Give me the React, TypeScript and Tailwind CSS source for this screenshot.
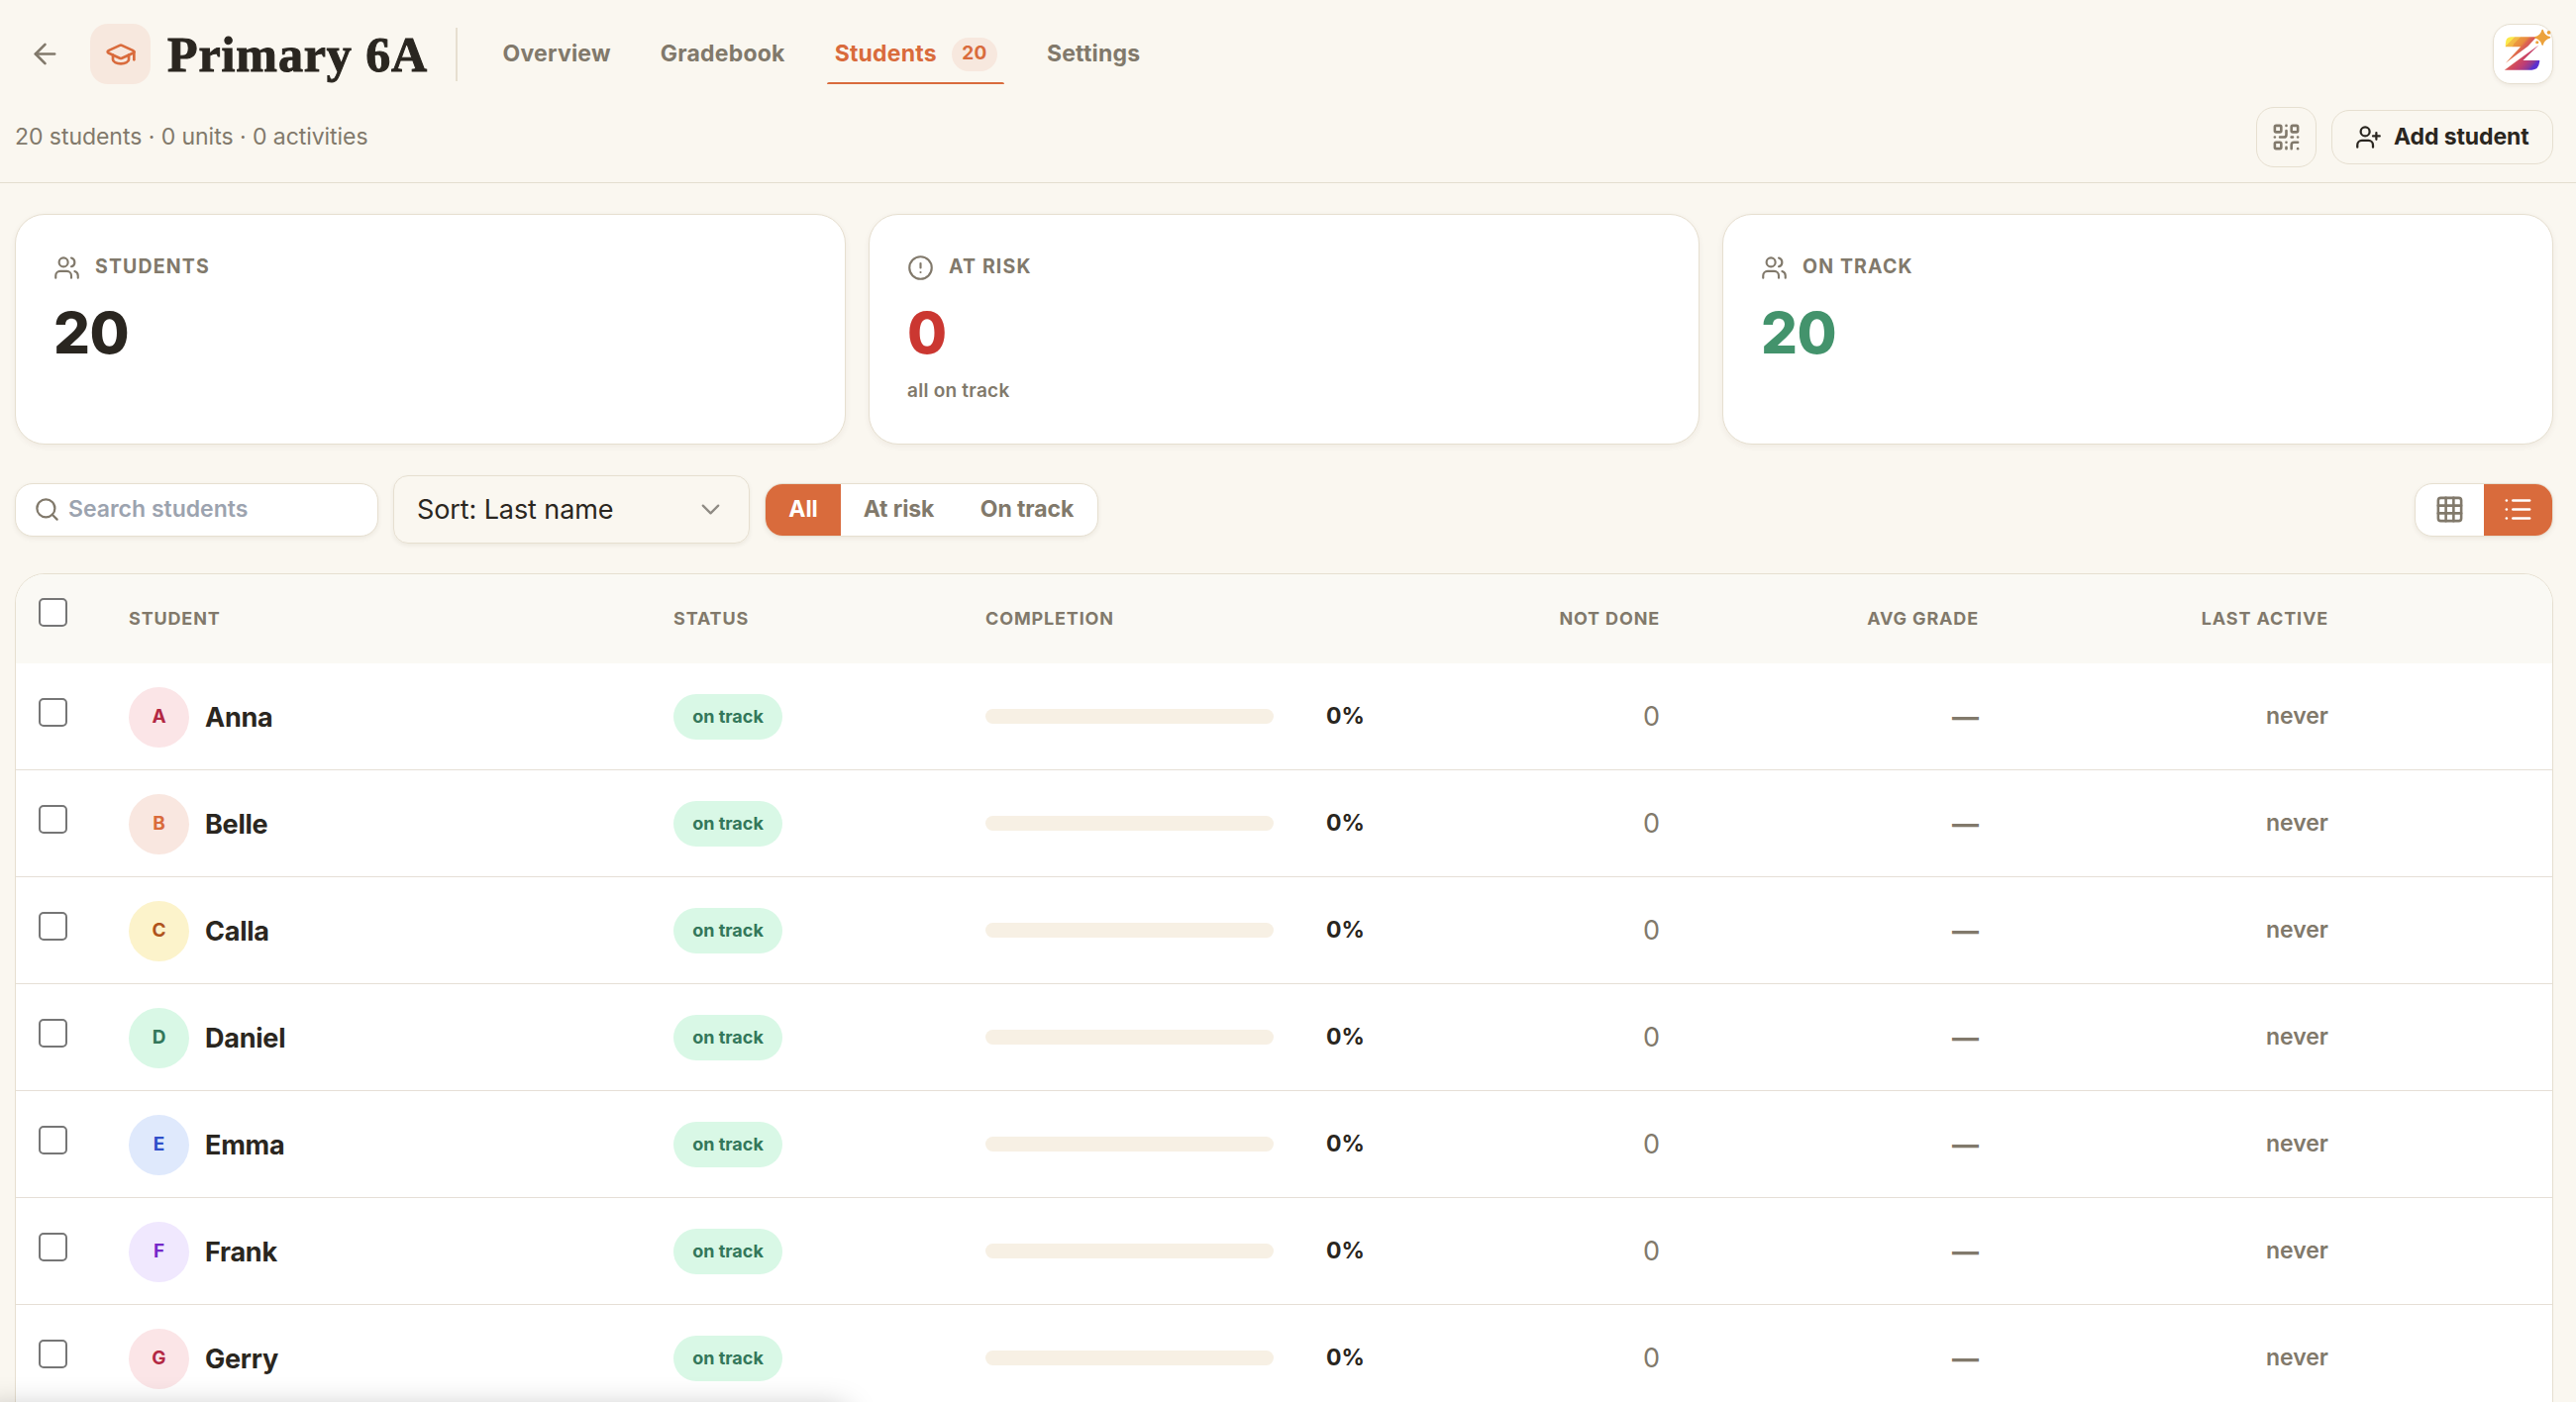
import React from 'react';
import { ArrowLeft, GraduationCap, QrCode, UserPlus, Users, CircleAlert, Search, ChevronDown, Grid3x3, List } from 'lucide-react';

const students = [
  { name: 'Anna', tone: 'bg-[#fbe5e7] text-[#b32843]' },
  { name: 'Belle', tone: 'bg-[#f9e7e0] text-[#d96b3c]' },
  { name: 'Calla', tone: 'bg-[#fcf3cb] text-[#b0531c]' },
  { name: 'Daniel', tone: 'bg-[#d9f8e6] text-[#33775a]' },
  { name: 'Emma', tone: 'bg-[#dfe9fc] text-[#2f4fc9]' },
  { name: 'Frank', tone: 'bg-[#f0e8fe] text-[#7528c9]' },
  { name: 'Gerry', tone: 'bg-[#fbe5e7] text-[#b32843]' },
];

const cols = 'grid grid-cols-[114px_550px_315px_345px_336px_322px_353px_1fr]';

function Logo() {
  return (
    <svg viewBox="0 0 60 60" className="h-full w-full overflow-visible">
      <defs>
        <linearGradient id="zg" x1="12" y1="14" x2="47" y2="46" gradientUnits="userSpaceOnUse">
          <stop offset="0.12" stopColor="#fbe94b" />
          <stop offset="0.12" stopColor="#f4c048" />
          <stop offset="0.22" stopColor="#f2b544" />
          <stop offset="0.22" stopColor="#eb9a3f" />
          <stop offset="0.34" stopColor="#e88a40" />
          <stop offset="0.4" stopColor="#dc6450" />
          <stop offset="0.55" stopColor="#cf4860" />
          <stop offset="0.68" stopColor="#bb3d78" />
          <stop offset="0.8" stopColor="#8a3a9a" />
          <stop offset="0.86" stopColor="#5a30d0" />
          <stop offset="1" stopColor="#5a30d0" />
        </linearGradient>
      </defs>
      <path d="M18 12.500H44L35 22L12 39.500L27.500 22.500H12V20Q12 12.500 18 12.500Z" fill="url(#zg)" />
      <path d="M46.500 20.500L30 36.500H47V38Q46 46.500 39 46.500H11Z" fill="url(#zg)" />
      <path d="M50 5.500Q51.500 11.500 57.500 13Q51.500 14.500 50 20.500Q48.500 14.500 42.500 13Q48.500 11.500 50 5.500Z" fill="#eca23c" stroke="#eca23c" strokeWidth="1.500" strokeLinejoin="round" />
      <circle cx="56.500" cy="8" r="1.900" fill="#eca23c" />
      <circle cx="44.500" cy="18" r="1.600" fill="#eca23c" />
    </svg>
  );
}

function StatCard({ icon: Icon, label, value, tone, note }: any) {
  return (
    <section className="h-[233px] rounded-[30px] border border-[#e6dfd0] bg-white px-[38px] pt-[38px] shadow-[0_2px_6px_rgba(60,40,10,0.06)]">
      <div className="flex h-[28px] items-center text-[#81796b]">
        <Icon size={27} strokeWidth={1.9} className="mt-[3px]" />
        <span className="mt-[1px] ml-[15px] text-[19.5px] font-bold tracking-[1.15px]">{label}</span>
      </div>
      <div className={`mt-[18px] text-[58px] leading-[70px] font-extrabold tracking-[-0.5px] ${tone}`}>{value}</div>
      {note && <div className="mt-[10px] text-[19px] leading-[28px] font-semibold tracking-[0.25px] text-[#81796b]">{note}</div>}
    </section>
  );
}

function Check({ className = '' }: { className?: string }) {
  return <span className={`block size-[29px] rounded-[5px] border-2 border-[#767676] bg-white ${className}`} />;
}

export default function App() {
  return (
    <div className="relative h-[1416px] w-full overflow-hidden bg-[#faf7f0] font-['Inter',sans-serif] text-[#2a2620]">
      <header className="h-[185px] border-b border-[#e3decf] pr-[23px] pl-[15px]">
        <div className="flex h-[109px] items-center">
          <ArrowLeft size={33} strokeWidth={1.9} className="ml-[14px] text-[#81796b]" />
          <div className="ml-[29px] flex size-[61px] items-center justify-center rounded-[18px] bg-[#f7e8de] text-[#d96b3c]">
            <GraduationCap size={32} strokeWidth={2} />
          </div>
          <h1 className="ml-[17px] w-[291px] font-['Liberation_Serif',serif] text-[50px] leading-[60px] font-bold whitespace-nowrap tracking-[0.9px] [-webkit-text-stroke:1px_#2a2620]">Primary 6A</h1>
          <div className="h-[54px] w-[2px] bg-[#e6dfd0]" />
          <nav className="ml-[38px] flex h-[61px] items-stretch gap-[35px] text-[23px] font-bold tracking-[0.22px] text-[#81796b]">
            <span className="flex items-center px-[7.5px]">Overview</span>
            <span className="flex items-center px-[7.5px]">Gradebook</span>
            <span className="relative flex items-center px-[7.5px] text-[#d96b3c]">
              Students
              <span className="ml-[15px] flex h-[34px] w-[46px] items-center justify-center rounded-full bg-[#f7e8de] text-[19px]">20</span>
              <span className="absolute inset-x-0 bottom-0 h-[2px] rounded-t-full bg-[#d96b3c]" />
            </span>
            <span className="flex items-center px-[7.5px]">Settings</span>
          </nav>
          <div className="ml-auto size-[61px] rounded-[18px] border border-[#e6dfd0] bg-white shadow-[0_2px_4px_rgba(60,40,10,0.06)]">
            <Logo />
          </div>
        </div>
        <div className="flex h-[58px] items-center">
          <p className="text-[23px] tracking-[-0.05px] text-[#81796b]">20 students · 0 units · 0 activities</p>
          <button className="ml-auto flex size-[61px] items-center justify-center rounded-[18px] border border-[#e6dfd0] text-[#81796b]">
            <QrCode size={31} strokeWidth={2} />
          </button>
          <button className="ml-[15px] flex h-[55px] w-[224px] items-center rounded-[18px] border border-[#e6dfd0] pl-[23px] text-[23px] font-bold">
            <UserPlus size={27} strokeWidth={2} />
            <span className="ml-[12px] tracking-[-0.1px] whitespace-nowrap">Add student</span>
          </button>
        </div>
      </header>

      <main className="pt-[31px] pr-[23px] pl-[15px]">
        <div className="grid grid-cols-3 gap-[23px]">
          <StatCard icon={Users} label="STUDENTS" value="20" tone="text-[#2a2620]" />
          <StatCard icon={CircleAlert} label="AT RISK" value="0" tone="text-[#cb3731]" note="all on track" />
          <StatCard icon={Users} label="ON TRACK" value="20" tone="text-[#43936c]" />
        </div>

        <div className="mt-[31px] flex h-[69px] items-center text-[23px]">
          <div className="flex h-[54px] w-[367px] items-center rounded-[18px] border border-[#e6dfd0] bg-white pl-[18px] font-semibold text-[#9ca3af] shadow-[0_2px_5px_rgba(60,40,10,0.07)]">
            <Search size={27} strokeWidth={2} className="text-[#81796b]" />
            <span className="ml-[8px]">Search students</span>
          </div>
          <div className="ml-[15px] flex h-[69px] w-[360px] items-center justify-between rounded-[15px] border border-[#e6dfd0] pr-[23px] pl-[23px] text-[27px] shadow-[0_2px_4px_rgba(60,40,10,0.07)]">
            <span className="mt-[1px] tracking-[-0.1px]">Sort: Last name</span>
            <ChevronDown size={31} strokeWidth={1.75} className="text-[#8f8b84]" />
          </div>
          <div className="ml-[15px] flex h-[54px] w-[337px] overflow-hidden rounded-[18px] border border-[#e6dfd0] bg-white font-bold tracking-[-0.1px] text-[#81796b] shadow-[0_2px_5px_rgba(60,40,10,0.07)]">
            <span className="flex w-[76px] items-center justify-center bg-[#d96b3c] text-white">All</span>
            <span className="flex w-[117px] items-center justify-center">At risk</span>
            <span className="flex flex-1 items-center justify-center">On track</span>
          </div>
          <div className="ml-auto flex h-[54px] w-[140px] overflow-hidden rounded-[18px] border border-[#e6dfd0] bg-white text-[#81796b] shadow-[0_2px_5px_rgba(60,40,10,0.07)]">
            <span className="flex flex-1 items-center justify-center"><Grid3x3 size={31} strokeWidth={2} /></span>
            <span className="flex flex-1 items-center justify-center bg-[#d96b3c] text-white"><List size={31} strokeWidth={2} /></span>
          </div>
        </div>

        <div className="mt-[30px] h-[900px] overflow-hidden rounded-[30px] border border-[#e6dfd0] bg-white">
          <div className={`${cols} h-[90px] items-center bg-[#faf9f4] text-[18px] leading-[26px] font-bold tracking-[0.85px] text-[#81796b]`}>
            <Check className="-mt-[13px] ml-[23px]" />
            <span className="-mt-[1px]">STUDENT</span>
            <span className="-mt-[1px]">STATUS</span>
            <span className="-mt-[1px]">COMPLETION</span>
            <span className="-mt-[1px] text-right">NOT DONE</span>
            <span className="-mt-[1px] text-right">AVG GRADE</span>
            <span className="-mt-[1px] text-right">LAST ACTIVE</span>
          </div>
          {students.map((s) => (
            <div key={s.name} className={`${cols} h-[108px] items-center border-b border-[#e6dfd6] text-[#81796b]`}>
              <Check className="-mt-[9px] ml-[23px]" />
              <div className="mt-[1px] flex items-center">
                <span className={`flex size-[61px] items-center justify-center rounded-full text-[19px] font-bold ${s.tone}`}>{s.name[0]}</span>
                <span className="mt-[2px] ml-[16px] text-[27px] font-bold tracking-[-0.25px] text-[#2a2620]">{s.name}</span>
              </div>
              <div className="flex h-[46px] w-[110px] items-center justify-center rounded-full bg-[#d9f8e6] text-[18px] font-bold text-[#33775a]">on track</div>
              <div className="flex items-center">
                <span className="h-[15px] w-[291px] shrink-0 rounded-full bg-[#f7f0e4]" />
                <span className="ml-[53px] text-[23px] font-bold text-[#2a2620]">0%</span>
              </div>
              <span className="mt-[2px] text-right text-[27px]">0</span>
              <span className="mt-[3px] text-right text-[27px] font-bold">—</span>
              <span className="text-right text-[23px] font-semibold">never</span>
            </div>
          ))}
        </div>
      </main>
      <div className="absolute top-[1422px] left-[-20px] h-[40px] w-[876px] rounded-[10px] shadow-[0_0_30px_rgba(0,0,0,0.25)]" />
    </div>
  );
}
